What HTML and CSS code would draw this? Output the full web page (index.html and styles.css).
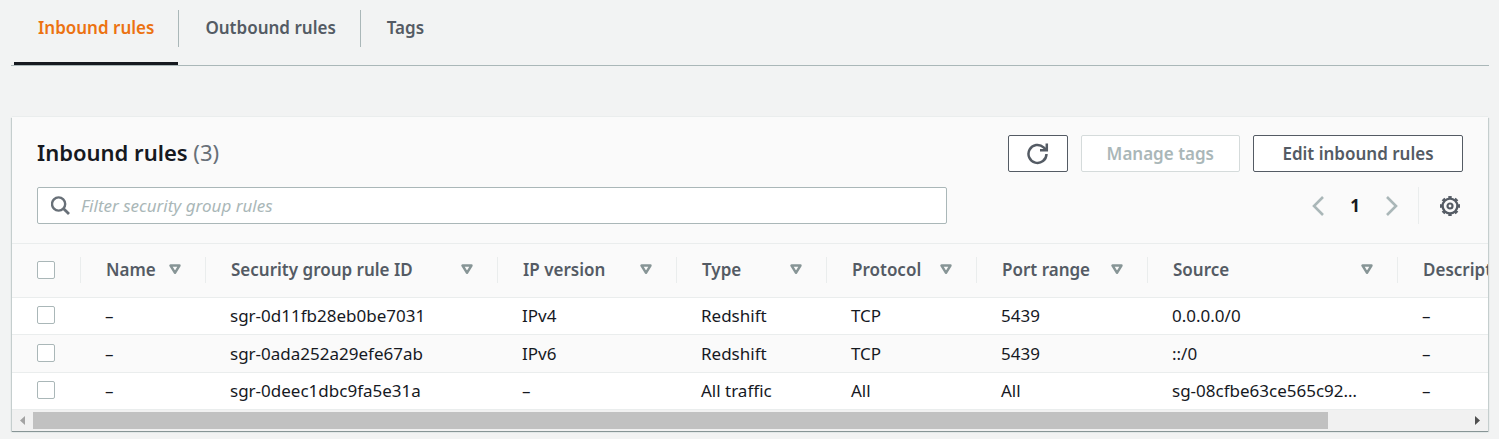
FILE: index.html
```html
<!DOCTYPE html>
<html lang="en">
<head>
<meta charset="utf-8">
<title>Inbound rules</title>
<link rel="stylesheet" href="styles.css">
</head>
<body>
<svg class="sprite" aria-hidden="true">
  <symbol id="sort" viewBox="0 0 12 11"><path d="M1.500 1.500h9L6 8.800z" fill="none" stroke="currentColor" stroke-width="2.4" stroke-linejoin="round"/></symbol>
</svg>
<nav class="tabs">
  <a class="tab tab-active" href="#inbound"><span class="tab-label">Inbound rules</span></a>
  <a class="tab" href="#outbound"><span class="tab-label">Outbound rules</span></a>
  <a class="tab" href="#tags"><span class="tab-label">Tags</span></a>
</nav>
<main class="panel" id="inbound">
  <header class="panel-header">
    <div class="title-row">
      <h2 class="title">Inbound rules <span class="count">(3)</span></h2>
      <div class="actions">
        <button class="button button-icon" type="button" aria-label="Refresh">
          <svg width="22" height="22" viewBox="0 0 22 22" fill="none" stroke="currentColor" stroke-width="2.5"><path d="M19.500 11A9 9 0 1 1 16.600 4.300L19 6.600"/><path d="M19.800 .6v6.700H13"/></svg>
        </button>
        <button class="button" type="button" disabled>Manage tags</button>
        <button class="button button-wide" type="button">Edit inbound rules</button>
      </div>
    </div>
    <div class="filter-row">
      <label class="filter">
        <svg width="20" height="20" viewBox="0 0 20 20" fill="none" stroke="currentColor" stroke-width="2.4"><circle cx="7.600" cy="8" r="6.600"/><path d="M12.400 12.600l5.600 5.400" stroke-width="2.800"/></svg>
        <input class="filter-input" type="text" placeholder="Filter security group rules" aria-label="Filter security group rules">
      </label>
      <div class="pager">
        <button class="plain arrow" type="button" aria-label="Previous page"><svg width="12" height="20" viewBox="0 0 12 20" fill="none" stroke="currentColor" stroke-width="2.600"><path d="M11 1L2 10l9 9"/></svg></button>
        <button class="plain page" type="button">1</button>
        <button class="plain arrow" type="button" aria-label="Next page"><svg width="12" height="20" viewBox="0 0 12 20" fill="none" stroke="currentColor" stroke-width="2.600"><path d="M1 1l9 9-9 9"/></svg></button>
        <div class="settings">
          <button class="plain" type="button" aria-label="Preferences"><svg width="22" height="22" viewBox="0 0 22 22" fill="none" stroke="currentColor"><circle cx="11" cy="11" r="7.400" stroke-width="2.400"/><circle cx="11" cy="11" r="9" stroke-width="2" pathLength="80" stroke-dasharray="5 5" stroke-dashoffset="2.500"/><circle cx="11" cy="11" r="2.500" stroke-width="2.200"/></svg></button>
        </div>
      </div>
    </div>
  </header>
  <div class="table-view">
    <table class="rules">
      <colgroup><col class="c-check"><col class="c-name"><col class="c-id"><col class="c-ip"><col class="c-type"><col class="c-type"><col class="c-port"><col class="c-wide"><col class="c-wide"></colgroup>
      <thead>
        <tr>
          <th><div class="head"><input class="check" type="checkbox" aria-label="Select all rules"></div></th>
          <th><div class="head">Name<svg class="sort"><use href="#sort"/></svg></div></th>
          <th><div class="head">Security group rule ID<svg class="sort"><use href="#sort"/></svg></div></th>
          <th><div class="head">IP version<svg class="sort"><use href="#sort"/></svg></div></th>
          <th><div class="head">Type<svg class="sort"><use href="#sort"/></svg></div></th>
          <th><div class="head">Protocol<svg class="sort"><use href="#sort"/></svg></div></th>
          <th><div class="head">Port range<svg class="sort"><use href="#sort"/></svg></div></th>
          <th><div class="head">Source<svg class="sort"><use href="#sort"/></svg></div></th>
          <th><div class="head">Description<svg class="sort"><use href="#sort"/></svg></div></th>
        </tr>
      </thead>
      <tbody>
        <tr><td><input class="check" type="checkbox" aria-label="Select sgr-0d11fb28eb0be7031"></td><td>–</td><td>sgr-0d11fb28eb0be7031</td><td>IPv4</td><td>Redshift</td><td>TCP</td><td>5439</td><td>0.0.0.0/0</td><td>–</td></tr>
        <tr><td><input class="check" type="checkbox" aria-label="Select sgr-0ada252a29efe67ab"></td><td>–</td><td>sgr-0ada252a29efe67ab</td><td>IPv6</td><td>Redshift</td><td>TCP</td><td>5439</td><td>::/0</td><td>–</td></tr>
        <tr><td><input class="check" type="checkbox" aria-label="Select sgr-0deec1dbc9fa5e31a"></td><td>–</td><td>sgr-0deec1dbc9fa5e31a</td><td>–</td><td>All traffic</td><td>All</td><td>All</td><td>sg-08cfbe63ce565c92…</td><td>–</td></tr>
      </tbody>
    </table>
  </div>
  <div class="scrollbar" aria-hidden="true">
    <svg width="21" height="17" viewBox="0 0 21 17"><path d="M13 4v9L8 8.500z" fill="#a3a3a3"/></svg>
    <div class="track"><div class="thumb"></div></div>
    <svg width="21" height="17" viewBox="0 0 21 17"><path d="M8 4v9l5-4.500z" fill="#505050"/></svg>
  </div>
</main>
</body>
</html>
```
FILE: styles.css
```css
* { box-sizing: border-box; }
body {
  margin: 0;
  padding: 0 11px 8px 12px;
  background: #f2f3f3;
  color: #16191f;
  font: 17px/24px "Noto Sans", "Open Sans", sans-serif;
}
button, input { font: inherit; }
svg { display: block; flex: none; }
.sprite { position: absolute; width: 0; height: 0; }

.tabs {
  display: flex;
  margin: 0 -1px;
  padding: 10px 0 0 3px;
  border-bottom: 1px solid #aab7b8;
}
.tab {
  padding-bottom: 15px;
  border-bottom: 3px solid transparent;
  color: #545b64;
  font-weight: 600;
  text-decoration: none;
}
.tab-active { color: #ec7211; border-bottom-color: #16191f; }
.tab-label {
  display: block;
  padding: 6px 24px 7px;
  line-height: 24px;
}
.tab + .tab .tab-label { padding-left: 26px; border-left: 1px solid #aab7b8; }

.panel {
  margin-top: 51px;
  background: #fafafa;
  box-shadow: 0 1px 0 #879596, 1px 1px 1px #c5cece, -1px 1px 1px #c5cece, 0 -1px 0 #eaeded;
}
.panel-header { padding: 18px 25px 19px; }
.title-row, .filter-row {
  display: flex;
  align-items: center;
  justify-content: space-between;
}
.title-row { align-items: flex-start; }
.title { margin: 0; font-size: 22px; line-height: 34px; font-weight: 600; }
.count { color: #687078; font-weight: 400; }
.actions { display: flex; gap: 13px; }
.button {
  height: 37px;
  padding: 0 25px;
  border: 1px solid #545b64;
  border-radius: 2px;
  background: #fff;
  color: #545b64;
  font-weight: 600;
}
.button-icon { padding: 0 18px; }
.button-wide { min-width: 210px; }
.button:disabled { border-color: #d5dbdb; color: #aab7b8; }
.filter-row { margin-top: 15px; gap: 24px; }
.filter {
  display: flex;
  align-items: center;
  flex: 0 1 910px;
  height: 37px;
  padding-left: 13px;
  gap: 10px;
  border: 1px solid #aab7b8;
  border-radius: 2px;
  background: #fff;
  color: #687078;
}
.filter-input {
  flex: 1;
  min-width: 0;
  padding: 0;
  border: 0;
  outline: 0;
  background: none;
}
.filter-input::placeholder { color: #aab7b8; font-style: italic; opacity: 1; }
.pager { display: flex; align-items: center; }
.plain { padding: 0; border: 0; background: none; color: #545b64; }
.plain.arrow { color: #aab7b8; }
.plain.page { width: 62px; color: #16191f; font-weight: 700; }
.settings {
  display: flex;
  align-items: center;
  height: 37px;
  margin-left: 20px;
  padding: 0 2px 0 20px;
  border-left: 1px solid #eaeded;
}

.table-view { overflow: hidden; border-top: 1px solid #eaeded; }
.rules { width: 1636px; table-layout: fixed; border-collapse: separate; border-spacing: 0; }
.c-check { width: 69px; }
.c-name { width: 125px; }
.c-id { width: 292px; }
.c-ip { width: 179px; }
.c-type { width: 150px; }
.c-port { width: 171px; }
.c-wide { width: 250px; }
th, td { padding: 0; text-align: left; white-space: nowrap; border-bottom: 1px solid #eaeded; }
th { height: 54px; padding-bottom: 2px; color: #545b64; font-weight: 600; }
.head {
  display: flex;
  align-items: center;
  justify-content: space-between;
  height: 26px;
  padding: 0 24px 0 25px;
  border-right: 1px solid #eaeded;
}
.sort { width: 12px; height: 11px; color: #879596; }
td { height: 37px; padding-left: 24px; background: #fff; }
td:first-child { padding: 0 0 2px 25px; }
tbody tr:nth-child(even) td { height: 38px; background: #fafafa; }
.check {
  appearance: none;
  display: block;
  width: 18px;
  height: 18px;
  margin: 0;
  border: 1px solid #aab7b8;
  border-radius: 2px;
  background: #fff;
}
.scrollbar {
  display: flex;
  padding: 2px 0;
  background: #f1f1f1;
}
.track { flex: 1; }
.thumb { width: 90.3%; height: 17px; background: #c1c1c1; }
```
